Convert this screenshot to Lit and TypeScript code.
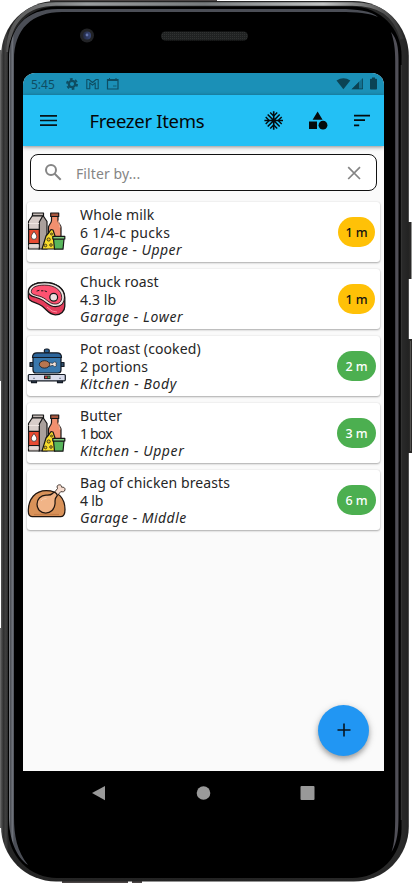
import { LitElement, html, css, svg } from "lit";
import { customElement, property } from "lit/decorators.js";
import { styleMap } from "lit/directives/style-map.js";

type Kind = "dairy" | "steak" | "pot" | "chicken";
type Line = { text: string; spacing: number };
type Item = { kind: Kind; name: Line; amount: Line; place: Line; age: string };

const line = (text: string, spacing = 0): Line => ({ text, spacing });

const ITEMS: Item[] = [
  { kind: "dairy", name: line("Whole milk", 0.13), amount: line("6 1/4-c pucks", 0.33), place: line("Garage - Upper", 0.45), age: "1 m" },
  { kind: "steak", name: line("Chuck roast", 0.1), amount: line("4.3 lb", 0.1), place: line("Garage - Lower", 0.63), age: "1 m" },
  { kind: "pot", name: line("Pot roast (cooked)", 0.1), amount: line("2 portions", 0.1), place: line("Kitchen - Body", 0.62), age: "2 m" },
  { kind: "dairy", name: line("Butter", 0.1), amount: line("1 box", -0.8), place: line("Kitchen - Upper", 0.58), age: "3 m" },
  { kind: "chicken", name: line("Bag of chicken breasts", 0.1), amount: line("4 lb", -0.2), place: line("Garage - Middle", 0.47), age: "6 m" },
];

const PICTURES = {
  dairy: svg`
    <g stroke="#161616" stroke-width="1.2" stroke-linejoin="round">
      <path d="M24.5 5.5h6.5v4c0 3 3 4 3 7v20h-12.500v-20c0-3 3-4 3-7z" fill="#f2906f"/>
      <path d="M23.700 2h8v3.500h-8z" fill="#a8573e"/>
      <path d="M5.500 4.500h10.500l4 6v27.500h-8v-27z" fill="#aaa09c"/>
      <path d="M5.500 4.500l-4 6v27.500h10.800v-27l3.700-6.500z" fill="#d8cdc9"/>
      <path d="M5.500 2h11v2.800h-11z" fill="#c4bab6"/>
      <path d="M1.600 18.300h10.700v14.200h-10.700z" fill="#e84b32"/>
      <path d="M24 18.500l-2 3-3 3.500-4 13h13v-13l-2-6z" fill="#f8dc2c"/>
      <path d="M26.500 28h10.500l-1 10.200h-8.500z" fill="#58b65c"/>
      <path d="M25.800 25.300h12v2.700h-12z" fill="#82cf83"/>
    </g>
    <path d="M1.600 35h10.500M1.600 12.500h10.500" stroke="#f0e6e2"/>
    <path d="M7 20.500c1.500 2.200 2.700 3.600 2.700 5.200a2.700 2.700 0 0 1-5.400 0c0-1.600 1.200-3 2.700-5.200z" fill="#fff" stroke="#222" stroke-width=".7"/>
    <g fill="#ecbe18" stroke="#222" stroke-width=".8"><circle cx="21.700" cy="28.500" r="1.600"/><circle cx="24" cy="34" r="1.300"/><circle cx="18.500" cy="34.500" r="1.300"/><circle cx="24.500" cy="23" r="1"/></g>
    <path d="M31.500 9.500c0 4 1.500 4 1.500 7" fill="none" stroke="#ffc0a8"/>`,
  steak: svg`
    <path d="M1.300 14c0-6.500 7-9.700 16-9.700 12 0 20.500 6 20.500 15.500v8.500c0 5-4 8.500-9.500 8.500-6 0-8-4.500-13-8.500-5.500-4.300-14-4-14-9z" fill="#e43d5b" stroke="#151515" stroke-width="1.300"/>
    <path d="M1.500 14c0-6.300 7-9.400 16-9.400 12 0 20 6 20 15 0 5.500-3.500 9-9 9-6 0-8-3.500-13-6.500-6-3.600-14-3-14-8.100z" fill="#efe5e3" stroke="#151515" stroke-width="1.100"/>
    <path d="M4.300 13.700c0-4.500 5.500-6.600 13.200-6.600 10 0 17.200 5 17.200 12.300 0 4-2.500 6.600-6.500 6.600-5 0-7-3.300-11.700-6.100-5.200-3-12.200-2.400-12.200-6.200z" fill="#ff5271" stroke="#151515" stroke-width=".8"/>
    <circle cx="26.700" cy="19.300" r="3.900" fill="#eee1e1" stroke="#151515" stroke-width="1.200"/>
    <path d="M10 13l2-.6M14.500 12.800h1.500M18 13l1.500.6" stroke="#151515" stroke-width="1" stroke-linecap="round"/>
    <path d="M20 29l5 4 5 1" fill="none" stroke="#ff8ba0" stroke-width="1"/>`,
  pot: svg`
    <g stroke="#141b25" stroke-width="1.200" stroke-linejoin="round">
      <rect x="17.300" y="4" width="5" height="4" rx="1.800" fill="#2b6296"/>
      <path d="M3 17.500h4v4h-4zM33 17.500h4v4h-4z" fill="#31506c"/>
      <path d="M6 12.500h28v12.500q0 3-3 3h-22q-3 0-3-3z" fill="#3978ad"/>
      <path d="M5.500 12.500c0-3 1.500-4.700 4.500-4.700h20c3 0 4.500 1.700 4.500 4.700z" fill="#2c659b"/>
      <path d="M4.500 35.500h5v2.200h-5zM30.500 35.500h5v2.200h-5z" fill="#34465c"/>
      <rect x="1.300" y="29.500" width="37" height="6.300" rx="1" fill="#d9dcec"/>
      <path d="M22 17.800l4 .5 1.500-1.500 2 1-.5 1.500.5 1.500-2 1-1.500-1.500-4 1z" fill="#f3e2d8" stroke-width=".6"/>
      <ellipse cx="17.500" cy="19.400" rx="5.200" ry="3.700" fill="#b97650" stroke-width=".8"/>
    </g>
    <rect x="17" y="30.500" width="6.500" height="3.600" fill="#222"/><path d="M18 31.500h2.300v1.600H18z" fill="#d64242"/><path d="M20.700 31.500h2v1.600h-2z" fill="#4a9c59"/>
    <path d="M6 33.300h2M32 33.300h2" stroke="#767c91"/>`,
  chicken: svg`
    <g stroke="#20150f" stroke-width="1.250" stroke-linejoin="round">
      <path d="M5 36.500c-2.500 0-3.700-2-3.700-5.500 0-12 7-20.500 18-20.500 12 0 18.700 8 18.700 19 0 5-1 7-4 7z" fill="#d99259"/>
      <path d="M26.500 13.500l4-5c-1.200-2.500.2-3.700 2.200-3.700 1.500 0 1.800 1.200 1.800 2.300 2.500-.2 3.800 1 3.500 2.700-.3 2.200-2.500 2.300-4.200 1.800l-4.300 5z" fill="#f6dccf" stroke-width=".8"/>
      <path d="M25.500 13.500c1.200-1.400 2.500-1.300 3.800 0 1.300 1.300 1.200 2.400 0 3.500-2 2-1 4-1.300 7-.5 5.500-4.300 9-9.300 9-5.200 0-8.700-3.700-8.700-8.700 0-5.300 3.800-9 9-9.100 3-.1 4.800.2 6.500-1.700z" fill="#f1b487"/>
    </g>
    <path d="M14 21c1.500-2 3.500-2.500 5.500-2.500" stroke="#f8cbaa" fill="none"/>
    <path d="M7 34.500h25" stroke="#c57e48" stroke-width="1.200"/>`,
};

@customElement("freezer-card")
class FreezerCard extends LitElement {
  @property({ attribute: false }) item!: Item;

  static styles = css`
    :host { display: flex; align-items: center; height: 59.500px; border-radius: 3px; background: #fff; box-shadow: 0 1px 2px rgba(0,0,0,.3), 0 0 2px rgba(0,0,0,.1); }
    .picture { width: 39px; height: 39px; flex: none; margin-bottom: 2px; }
    .lines { flex: 1; padding: 1px 0 0 14px; font-size: 14px; line-height: 17.500px; color: #262626; white-space: nowrap; }
    .place { font-style: italic; }
    .age { flex: none; box-sizing: border-box; width: 39px; height: 29.500px; margin-right: 4px; padding-top: 1px; border-radius: 15px; background: #4caf50; color: #fff; font-size: 12.500px; font-weight: 500; line-height: 29px; text-align: center; }
    .soon { width: 37px; margin-right: 5px; background: #ffc107; color: #111; }
  `;

  render() {
    const { kind, name, amount, place, age } = this.item;
    const track = (l: Line) => styleMap({ letterSpacing: `${l.spacing}px` });
    return html`
      <svg class="picture" viewBox="0 0 39 39">${PICTURES[kind]}</svg>
      <div class="lines">
        <div><span style=${track(name)}>${name.text}</span></div>
        <div><span style=${track(amount)}>${amount.text}</span></div>
        <div class="place"><span style=${track(place)}>${place.text}</span></div>
      </div>
      <div class="age ${age === "1 m" ? "soon" : ""}">${age}</div>`;
  }
}

@customElement("phone-shell")
class PhoneShell extends LitElement {
  static styles = css`:host, svg { display: block; width: 417px; height: 883px; }`;

  render() {
    return html`<svg viewBox="0 0 417 883">
      <defs>
        <linearGradient id="rim" x1="0" x2="1" y1="0" y2="0">
          <stop offset="0" stop-color="#555"/><stop offset=".006" stop-color="#303030"/><stop offset=".012" stop-color="#404040"/><stop offset=".018" stop-color="#252525"/><stop offset=".5" stop-color="#232323"/><stop offset=".985" stop-color="#292929"/><stop offset="1" stop-color="#222"/>
        </linearGradient>
        <linearGradient id="shine" x1="0" x2="1" y1="0" y2="0">
          <stop offset="0" stop-color="#555"/><stop offset=".2" stop-color="#999c9e"/><stop offset=".5" stop-color="#777b7d"/><stop offset=".8" stop-color="#c1c3c3"/><stop offset="1" stop-color="#333"/>
        </linearGradient>
        <linearGradient id="side" gradientUnits="userSpaceOnUse" x1="9" x2="14" y1="0" y2="0">
          <stop offset="0" stop-color="#8b8e93"/><stop offset=".3" stop-color="#50535a"/><stop offset=".7" stop-color="#6d7179"/><stop offset="1" stop-color="#4b4e56"/>
        </linearGradient>
        <linearGradient id="lens"><stop offset="0" stop-color="#222840"/><stop offset="1" stop-color="#39487a"/></linearGradient>
        <pattern id="mesh" width="2" height="2" patternUnits="userSpaceOnUse"><rect width="2" height="2" fill="#202222"/><rect width="1" height="1" fill="#303232"/></pattern>
      </defs>
      <path d="M0 50h1.500v331H0zM0 628h1.500v200H0z" fill="#666"/>
      <path d="M50 0h167v2H50zM62 881h66v2H62zM132 881h10v2h-10z" fill="#4b4545"/>
      <path d="M407 222h4.500v57H407zM407 339h5v114h-5z" fill="#292827"/>
      <path d="M410.500 341v110" stroke="#555451"/>
      <rect x="1" y="1" width="407.800" height="880.500" rx="55" fill="url(#rim)"/>
      <path d="M8 52C8 22 26 4 56 4h296c27 0 43 10 50 35" fill="none" stroke="url(#shine)" stroke-width="3.500"/>
      <rect x="8" y="6.500" width="393.500" height="871.500" rx="49" fill="#000"/>
      <path d="M9 817V60C9 27 26 9 58 9h282c16 0 32 2 38 8-8-4-22-5-38-5H62C32 12 14 29 14 60v757c0 19 3 34 14 48-12-8-19-26-19-48z" fill="url(#side)"/>
      <path d="M391 32c6 7 7.500 15 7.500 28v755c0 16-1 27-7 37 3-8 3.700-20 3.700-37V61c0-12-1-20-4.200-29z" fill="#504f57"/>
      <path d="M401.300 65v755" stroke="#454545" stroke-width=".8"/>
      <rect x="161" y="31.500" width="87" height="9" rx="4.500" fill="url(#mesh)"/>
      <circle cx="87" cy="35.500" r="7" fill="#222326"/><circle cx="87" cy="35.500" r="4" fill="url(#lens)"/><circle cx="87" cy="35" r="1.400" fill="#6475ad"/>
    </svg>`;
  }
}

@customElement("app-root")
class AppRoot extends LitElement {
  static styles = css`
    :host { display: block; position: relative; box-sizing: border-box; width: 417px; height: 883px; overflow: hidden; background: #fff; font-family: "Noto Sans", "Open Sans", sans-serif; }
    .shell { position: absolute; inset: 0; }
    .phone { position: relative; box-sizing: border-box; padding: 73px 33px 0 23px; }
    .screen { position: relative; height: 698px; overflow: hidden; border-radius: 12px 12px 0 0; background: #fafafa; }
    .status { display: flex; align-items: center; height: 22px; background: #1b90b7; color: #0e4d62; }
    .clock { width: 34px; margin-left: 8px; font-size: 12px; line-height: 23px; }
    .status svg { display: block; width: 70px; height: 22px; }
    .status .signals { width: 50px; margin-left: auto; }
    .bar { position: relative; display: flex; align-items: center; height: 51px; background: #23c0f5; box-shadow: 0 1px 4px rgba(0,0,0,.45); }
    .bar svg { display: block; flex: none; height: 51px; }
    .menu { width: 51px; }
    .actions { width: 133px; margin-left: auto; }
    .title { margin-left: 15.500px; font-size: 18.500px; line-height: 52px; color: #050505; letter-spacing: -.3px; white-space: nowrap; }
    .search { display: flex; align-items: center; box-sizing: border-box; height: 37px; margin: 8px 7px 0; border: 1.250px solid #111; border-radius: 8px; background: #fff; color: #858585; font-size: 14px; letter-spacing: .1px; }
    .search svg { width: 18px; height: 18px; flex: none; }
    .search .glass { margin: 0 13px 2px 13px; }
    .search span { padding: 1px 0 0 1px; }
    .search .clear { width: 16px; height: 16px; margin: 0 14.500px 0 auto; }
    .list { display: grid; gap: 7.600px; padding: 11px 4px 0; }
    .add { position: absolute; right: 14.700px; bottom: 15px; display: grid; place-items: center; width: 51.500px; height: 51.500px; border-radius: 50%; background: #2196f3; box-shadow: 0 3px 5px rgba(0,0,0,.28), 0 2px 9px rgba(0,0,0,.16); }
    .add svg { width: 14px; height: 14px; }
    .nav { display: flex; justify-content: space-between; height: 44px; padding: 0 69px 0 68px; }
    .nav svg { width: 15px; height: 44px; }
  `;

  render() {
    return html`
      <phone-shell class="shell"></phone-shell>
      <div class="phone">
        <div class="screen">
          <div class="status">
            <span class="clock">5:45</span>
            <svg viewBox="0 0 70 22" fill="none" stroke="currentColor">
              <circle cx="7" cy="11" r="3.200" stroke-width="2.300"/>
              <circle cx="7" cy="11" r="5" stroke-width="2" stroke-dasharray="2.600 2.636"/>
              <path d="M21.800 6.500h2l3.700 3 3.700-3h2v9.300h-3v-6l-2.700 2.300-2.700-2.300v6h-3z" stroke-width="1.100" stroke-linejoin="round"/>
              <path d="M42.500 6.500h10.500v9.500H42.500zM42.500 7.500h10.500" stroke-width="1.200"/><path d="M44.500 5v2M51 5v2" stroke-width="1"/><path d="M48 13h3.500" stroke-width="1.500" opacity=".5"/>
            </svg>
            <svg class="signals" viewBox="0 0 50 22" fill="#0b4354">
              <path d="M2.500 7.600Q9.500 3 16.300 7.600L9.400 16.300z"/>
              <path d="M17.500 16.300L28 5.800v10.500z" opacity=".4"/><path d="M17.500 16.300l7.500-7.500v7.500zM28.200 5.500h.8v10.800h-5v-.8h4.200z"/>
              <path d="M36 6.500q0-.8.800-.8h1.200v-1.200h3v1.200h1.200q.8 0 .8.800v9q0 1-.8 1h-5.400q-.8 0-.8-1z"/>
            </svg>
          </div>
          <div class="bar">
            <svg class="menu" viewBox="0 0 51 51" fill="none" stroke="#071318" stroke-width="1.700"><path d="M17 20.800h17M17 25.500h17M17 30.200h17"/></svg>
            <span class="title">Freezer Items</span>
            <svg class="actions" viewBox="0 0 133 51" fill="#050b0d">
              <g transform="translate(22.700 25.500)" fill="none" stroke="#050b0d" stroke-width="1.600">
                <path d="M0-9.300v18.600M-9.300 0h18.600M-6 -6l12 12M6 -6l-12 12"/>
                <path d="M-3.500-8L0-4.500l3.500-3.500M-3.500 8L0 4.500l3.500 3.500M-8-3.500l3.500 3.500-3.500 3.500M8-3.500l-3.500 3.500 3.500 3.500" stroke-width="1.400"/>
              </g>
              <path d="M66.600 16.500l5 8.300h-10zM58 26.500h8v7.500h-8z"/><circle cx="72" cy="30.200" r="4.400"/>
              <path d="M103 19.700h16v1.700h-16zM103 24.300h11v1.700h-11zM103 29.500h5.200v1.700H103z"/>
            </svg>
          </div>
          <div class="search">
            <svg class="glass" viewBox="0 0 18 18" fill="none" stroke="#858585" stroke-width="2"><circle cx="7" cy="7" r="5"/><path d="M10.700 10.700l6 6"/></svg>
            <span>Filter by...</span>
            <svg class="clear" viewBox="0 0 16 16" stroke="#858585" stroke-width="1.700"><path d="M2.200 2.200l11.800 11.800M14 2.200L2.200 14"/></svg>
          </div>
          <div class="list">${ITEMS.map((item) => html`<freezer-card .item=${item}></freezer-card>`)}</div>
          <div class="add"><svg viewBox="0 0 14 14" stroke="#07141f" stroke-width="1.600"><path d="M7 .5v13M.5 7h13"/></svg></div>
        </div>
        <div class="nav">
          <svg viewBox="0 0 15 44" fill="#999"><path d="M1 22L14 15v14.300z"/></svg>
          <svg viewBox="0 0 15 44" fill="#999"><circle cx="7.500" cy="22" r="6.800"/></svg>
          <svg viewBox="0 0 15 44" fill="#999"><rect x=".5" y="15" width="14" height="14" rx="1"/></svg>
        </div>
      </div>`;
  }
}
